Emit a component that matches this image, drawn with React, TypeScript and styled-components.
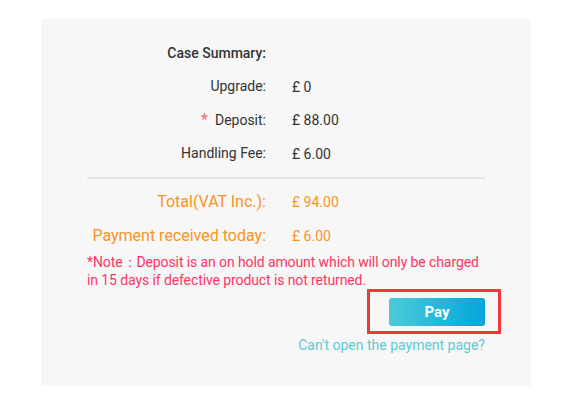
import React from "react";
import styled, {createGlobalStyle} from "styled-components";

const GlobalStyle = createGlobalStyle`
    body {
        margin: 0;
        background: #ffffff;
        font-family: Roboto, "Liberation Sans", Arial, sans-serif;
    }
`

const Page = styled.div`
    padding: 19px 42px 20px 41px;
`

const Panel = styled.div`
    background: #f7f7f7;
    width: 490px;
    height: 367px;
    box-sizing: border-box;
    padding: 18px 46px 0 46px;
`

const Rows = styled.div`
    display: grid;
    grid-template-columns: 179px 1fr;
    column-gap: 26px;
`

const Label = styled.div<{ $tone?: string; $bold?: boolean; $big?: boolean }>`
    text-align: right;
    font-size: ${p => p.$big ? 16 : 14}px;
    line-height: ${p => p.$big ? 34 : 33}px;
    font-weight: ${p => p.$bold ? 500 : 400};
    color: ${p => p.$tone || "#333333"};
`

const Value = styled.div<{ $tone?: string }>`
    font-size: 14px;
    color: ${p => p.$tone || "#333333"};
    display: flex;
    align-items: center;
`

const Star = styled.span`
    color: #f56c6c;
    font-size: 16px;
    margin-right: 7px;
`

const Divider = styled.div`
    height: 2px;
    background: #e6e6e6;
    margin: 7px 0 6px;
`

const Note = styled.p`
    margin: 0;
    font-size: 14px;
    line-height: 18px;
    letter-spacing: -0.1px;
    color: #ff3464;
`

const Actions = styled.div`
    display: flex;
    flex-direction: column;
    align-items: flex-end;
    margin-top: 9px;
`

const PayWrap = styled.div`
    position: relative;
`

const Highlight = styled.span`
    position: absolute;
    left: -22px;
    right: -16px;
    top: -9px;
    bottom: -8px;
    border: 3px solid #f0393b;
    pointer-events: none;
`

const PayButton = styled.button`
    display: block;
    width: 96px;
    height: 28px;
    border: none;
    border-radius: 3px;
    background: linear-gradient(90deg, #4ccbd6 0%, #03a6dd 100%);
    color: #ffffff;
    font-family: inherit;
    font-size: 15px;
    font-weight: 700;
    cursor: pointer;
`

const HelpLink = styled.a`
    margin-top: 10px;
    font-size: 14px;
    line-height: 18px;
    color: #5ccad8;
    text-decoration: none;
`

const App = () => {
    return (
        <>
            <GlobalStyle/>
            <Page>
                <Panel>
                    <Rows>
                        <Label $bold>Case Summary:</Label>
                        <Value/>
                        <Label>Upgrade:</Label>
                        <Value>£ 0</Value>
                        <Label><Star>*</Star>Deposit:</Label>
                        <Value>£ 88.00</Value>
                        <Label>Handling Fee:</Label>
                        <Value>£ 6.00</Value>
                    </Rows>
                    <Divider/>
                    <Rows>
                        <Label $big $tone="#f7941d">Total(VAT Inc.):</Label>
                        <Value $tone="#f7941d">£ 94.00</Value>
                        <Label $big $tone="#f7941d">Payment received today:</Label>
                        <Value $tone="#f7941d">£ 6.00</Value>
                    </Rows>
                    <Note>*Note：Deposit is an on hold amount which will only be charged in 15 days if defective product is not returned.</Note>
                    <Actions>
                        <PayWrap>
                            <PayButton>Pay</PayButton>
                            <Highlight/>
                        </PayWrap>
                        <HelpLink href="#">Can't open the payment page?</HelpLink>
                    </Actions>
                </Panel>
            </Page>
        </>
    )
}

export default App
